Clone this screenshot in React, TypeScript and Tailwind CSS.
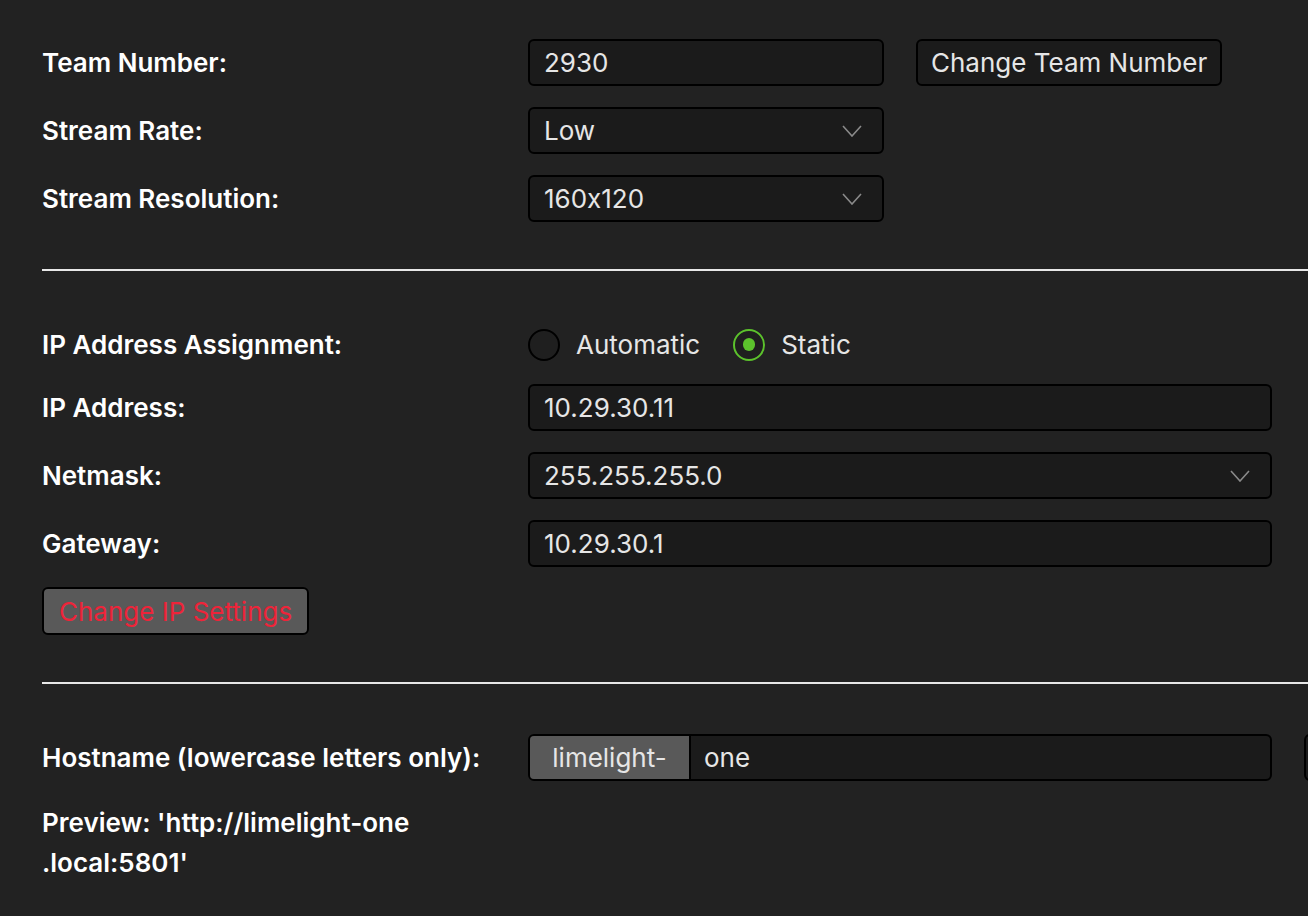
import React from 'react';

const Chevron = () => (
  <svg width="20" height="12" viewBox="0 0 20 12" className="shrink-0">
    <path d="M1 1 L10 11 L19 1" fill="none" stroke="#8a8a8a" strokeWidth="1.6" />
  </svg>
);

const Label = ({ children }: { children: React.ReactNode }) => (
  <div className="w-[486px] shrink-0 text-[26px] font-semibold text-white">{children}</div>
);

const TextBox = ({ value, wide }: { value: string; wide?: boolean }) => (
  <div
    className={`${wide ? 'w-[744px]' : 'w-[356px]'} shrink-0 h-[47px] flex items-center pl-[14px] bg-[#1b1b1b] border-2 border-black rounded-[6px] text-[26px] text-[#e6e6e6]`}
  >
    {value}
  </div>
);

const SelectBox = ({ value, wide }: { value: string; wide?: boolean }) => (
  <div
    className={`${wide ? 'w-[744px]' : 'w-[356px]'} shrink-0 h-[47px] flex items-center justify-between pl-[14px] pr-5 bg-[#1b1b1b] border-2 border-black rounded-[6px] text-[26px] text-[#e6e6e6]`}
  >
    <span>{value}</span>
    <Chevron />
  </div>
);

const Radio = ({ checked, label }: { checked?: boolean; label: string }) => (
  <div className="flex items-center gap-4">
    <div
      className={`w-[32px] h-[32px] rounded-full border-2 flex items-center justify-center bg-[#1f1f1f] ${
        checked ? 'border-[#5cc22c]' : 'border-black'
      }`}
    >
      {checked && <div className="w-[12px] h-[13px] rounded-full bg-[#5cc22c]" />}
    </div>
    <span className="text-[26px] text-[#e6e6e6]">{label}</span>
  </div>
);

const Row = ({ children }: { children: React.ReactNode }) => (
  <div className="flex items-center h-[47px]">{children}</div>
);

export default function App() {
  return (
    <div className="w-[1308px] h-[916px] overflow-hidden bg-[#222222] font-['Inter','Noto_Sans',sans-serif] [font-feature-settings:'calt'_0]">
      <div className="pl-[42px] pt-[39px]">
        {/* Stream settings */}
        <div className="flex flex-col gap-[21px]">
          <Row>
            <Label>Team Number:</Label>
            <TextBox value="2930" />
            <button className="ml-[32px] shrink-0 h-[47px] px-[13px] bg-[#1b1b1b] border-2 border-black rounded-[6px] text-[26px] text-[#e6e6e6]">
              Change Team Number
            </button>
          </Row>
          <Row>
            <Label>Stream Rate:</Label>
            <SelectBox value="Low" />
          </Row>
          <Row>
            <Label>Stream Resolution:</Label>
            <SelectBox value="160x120" />
          </Row>
        </div>

        <div className="mt-[47px] h-[2px] bg-[#e8e8e8]" />

        {/* IP settings */}
        <div className="pt-[50px]">
          <Row>
            <Label>IP Address Assignment:</Label>
            <div className="flex items-center gap-[33px]">
              <Radio label="Automatic" />
              <Radio checked label="Static" />
            </div>
          </Row>
          <div className="mt-[16px] flex flex-col gap-[21px]">
            <Row>
              <Label>IP Address:</Label>
              <TextBox wide value="10.29.30.11" />
            </Row>
            <Row>
              <Label>Netmask:</Label>
              <SelectBox wide value="255.255.255.0" />
            </Row>
            <Row>
              <Label>Gateway:</Label>
              <TextBox wide value="10.29.30.1" />
            </Row>
          </div>
          <button className="mt-[20px] h-[48px] px-[15px] bg-[#595959] border-2 border-black rounded-[6px] text-[26px] text-[#ee2439]">
            Change IP Settings
          </button>
        </div>

        <div className="mt-[47px] h-[2px] bg-[#e8e8e8]" />

        {/* Hostname */}
        <div className="pt-[50px]">
          <Row>
            <Label>Hostname (lowercase letters only):</Label>
            <div className="w-[744px] shrink-0 h-[47px] flex bg-[#1b1b1b] border-2 border-black rounded-[6px] overflow-hidden text-[26px] text-[#e6e6e6]">
              <div className="w-[161px] flex items-center justify-center bg-[#595959] border-r-2 border-black">
                limelight-
              </div>
              <div className="flex items-center pl-[13px]">one</div>
            </div>
            <button className="ml-[32px] shrink-0 h-[47px] px-[13px] bg-[#1b1b1b] border-2 border-black rounded-[6px] text-[26px] text-[#e6e6e6] whitespace-nowrap">
              Change Hostname
            </button>
          </Row>
          <div className="mt-[22px] text-[26px] font-semibold text-white leading-[40px]">
            <div>Preview: 'http://limelight-one</div>
            <div>.local:5801'</div>
          </div>
        </div>
      </div>
    </div>
  );
}
